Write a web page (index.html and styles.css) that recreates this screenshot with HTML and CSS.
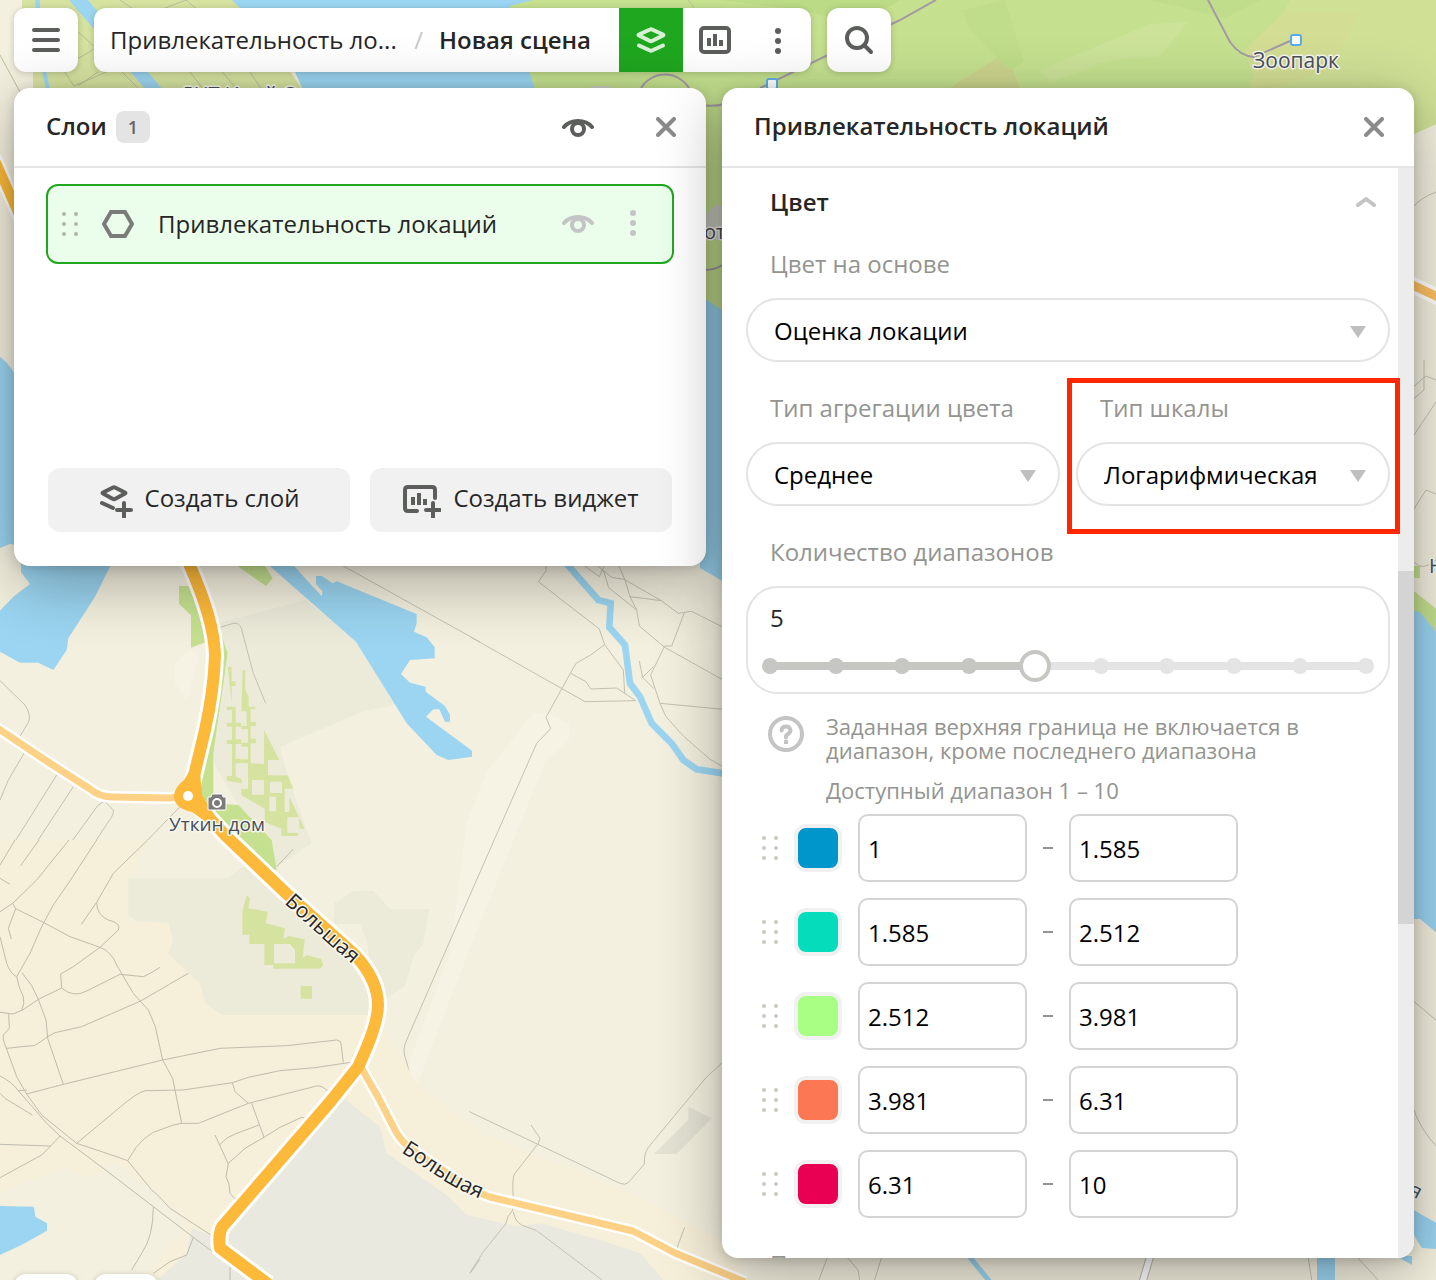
FILE: index.html
```html
<!DOCTYPE html>
<html lang="ru">
<head>
<meta charset="utf-8">
<meta name="viewport" content="width=device-width, initial-scale=1">
<title>Привлекательность локаций</title>
<link rel="stylesheet" href="styles.css">
</head>
<body>
<svg class="map" viewBox="0 0 1436 1280" preserveAspectRatio="xMinYMin slice" aria-hidden="true">
  <rect width="1436" height="1280" fill="#f4f0df"/>

  <!-- parks and water along the north edge -->
  <path fill="#d6e2a0" d="M22 0H240L310 100H33V72L22 8Z"/>
  <path fill="#c5e18f" d="M500 0H1436V124L1414 134H722V318L700 300V100H530Z"/>
  <path fill="#d0e196" d="M1290 0H1436V124L1400 140H1230L1260 60Z"/>
  <path fill="#d3dd93" d="M1244 50L1284 12L1360 12L1330 70L1260 92Z"/>
  <path fill="#cbd48c" d="M950 88L1006 52L1020 88Z"/>
  <path fill="#bfdd8a" d="M963 10L1005 0L1024 62L1010 70L968 28ZM1150 0H1260L1225 18Z"/>
  <path fill="#bcdb86" d="M720 0H900L860 24L800 10Z"/>
  <path fill="#cbe298" d="M1040 70L1150 24L1188 22L1160 56L1110 60L1050 82Z"/>
  <path fill="#9bd5f1" d="M232 0H533L510 6L535 90H303L295 72L240 8ZM69 0H88L163 90H146Z"/>
  <path fill="#9bd5f1" d="M35 0H40L40 40L50 90H46L38 50Z"/>
  <path fill="none" stroke="#b9bd96" d="M120 0L140 14M160 10L186 0L212 22M76 30L96 48L62 68L74 86L120 66M78 86L98 72M122 72L140 90M190 72L204 90M222 72L238 90M250 72L262 90M688 0L696 10M0 55L20 92"/>
  <path fill="none" stroke="#a39aa6" stroke-width="2" d="M640 90A28 28 0 0 1 690 90M760 88L830 54L900 20L936 0M1208 0L1230 42Q1240 56 1254 57L1290 41M700 105Q715 107 724 104M704 270Q716 270 724 264"/>
  <path fill="#9bd5f1" d="M704 298L724 312V582L700 568Z"/>
  <path fill="#cfd0c6" d="M706 214L716 204L724 208V240H706ZM591 86H610V90H591Z"/>

  <!-- west edge -->
  <path fill="#9bd5f1" d="M0 357Q8 362 16 376V545L10 544L0 548Z"/>
  <path fill="none" stroke="#fff" stroke-width="15" d="M-6 158L24 226"/>
  <path fill="none" stroke="#fdb93a" stroke-width="10" d="M-6 158L24 226"/>

  <!-- east edge -->
  <path fill="none" stroke="#c2bfae" d="M1412 208Q1420 198 1436 192M1412 388L1426 376L1436 380M1412 400L1424 390V360M1412 438L1436 402M1412 512L1426 490L1436 494M1414 562Q1422 572 1436 560M1412 670L1436 700M1412 1000L1436 1020M1412 1105Q1420 1130 1438 1148"/>
  <path fill="none" stroke="#fff" stroke-width="16" d="M1406 282L1440 298"/>
  <path fill="none" stroke="#fdc163" stroke-width="9" d="M1406 282L1440 298"/>
  <path fill="#c5e18f" d="M1410 566H1420V578H1410ZM1410 588L1438 610V636L1410 612Z"/>
  <path fill="#9bd5f1" d="M1410 610L1420 612L1438 634V934L1420 919H1410ZM1410 1208L1438 1224V1249L1422 1248Q1412 1235 1410 1220ZM1396 1256H1412V1265Z"/>

  <!-- lakes and fields south of the panel -->
  <svg x="0" y="440" width="480" height="420" viewBox="0 0 1440 1260" overflow="visible">
    <path fill="#ecebda" d="M650 550L915 480L1068 600L1185 795L1085 815L840 922L870 1030L935 1210L820 1290L740 1140L625 940L680 640Z"/>
    <path fill="#c5e18f" d="M537 438H590L620 605L573 623V526L537 492ZM700 370H790L818 415L798 438ZM664 585L683 640L640 940L640 1090L715 1095L815 1200L830 1290L800 1290L600 1090V980L640 800Z"/>
    <path fill="#d6e3a0" d="M683 680h12v44h12v14h-12v62h12v48h16v12h-16v38h16v14h-16v44h16v14h-16v40l18 6v14l-45-8v-14h16v-96h-16v-12h16v-40h-16v-12h16v-38h-16v-10h16zM728 690h8v60l10 20v30h20v8h-14v38h16v12h-16v38h16v14h-16v60l40 2V870l46 90h-34v46h60l16 40h-26v70h14v-46l46 96h-20v22h-50v-22l-50-20v-40l-70-40v-20h20v-76h-20v-12h20v-38h-20v-12h20v-40h-20v-10h16v-44h-16z"/>
    <path fill="#ecebda" d="M756 1020h36v44h-36zM810 1025h36v34h-36zM808 1070h20v44h-20zM862 1132h36v46h-36z"/>
    <path fill="#9bd5f1" d="M63 370H335L285 470L205 595L200 630L160 690L115 668H60L0 635V512L40 470L90 432L63 396Z"/>
    <path fill="#9bd5f1" d="M800 370H875L920 420L965 468L968 455L948 432V408H965L998 430L1010 424L1250 522V550L1242 575L1280 592L1304 622V655L1230 660L1203 702L1230 728L1277 740V755L1335 798L1350 825V845H1335L1318 808H1300L1278 830L1416 932V950L1345 960L1310 945L1220 850L1068 605Z"/>
    <path fill="#f6f3e5" d="M570 630L595 650L560 780L525 730V670Z"/>
    <path fill="none" stroke="#c3c1b0" stroke-width="3" d="M1030 378L1440 606M650 565L700 550Q718 548 724 565L760 700L797 790M0 722L75 795Q95 825 85 848L58 892L0 850M75 935L25 1020L0 1080M170 1005L10 1260M220 1040L75 1260M310 1080L340 1110Q342 1125 325 1145L250 1260M310 1085Q290 1095 280 1115L175 1260M540 1100L385 1260"/>
  </svg>
  <svg x="470" y="540" width="270" height="420" viewBox="0 0 810 1260" overflow="visible">
    <path fill="#f6f3e5" d="M190 518L240 522L297 552V598L225 665L0 1225L-100 1480L-190 1720L-210 1640L-60 1240L-10 850L48 700Z"/>
    <path fill="none" stroke="#9bd5f1" stroke-width="20" d="M280 60L385 180L422 190L418 262L465 315L480 430L510 470L545 550L605 610L640 660L680 688L760 700"/>
    <path fill="none" stroke="#c3c1b0" stroke-width="3" d="M0 290L345 485L497 482L440 444L362 447L348 425L301 400L318 370L362 345L404 314L460 390L464 460M228 70V92L205 125L388 267L404 314M301 400L228 532L242 566L200 610L0 1065L-190 1500Q-205 1530 -192 1560L-165 1655Q-150 1690 -60 1732L0 1760M340 75L388 110L404 75M380 75L425 112L462 118L574 182L625 220L665 214L760 262M400 90L416 143L500 210L508 258L584 322L760 420M445 75L465 120L480 170L574 182M480 170L500 210M644 216L605 318H584L542 405L570 490L760 508M508 363L518 412L550 380M518 412L552 446M570 490L588 530L640 588L720 658L760 680"/>
  </svg>

  <!-- residential grid and industrial zone -->
  <svg x="0" y="840" width="480" height="440" viewBox="0 0 1440 1320" overflow="visible">
    <path fill="#f6efd9" d="M0 0H445L385 115V240L505 250L600 430L670 525H1120L1260 740L1440 880L1900 1060L2240 1240L2190 1340H400L440 1290L320 1040L200 980L0 1060Z"/>
    <path fill="#f4f0df" d="M0 1060L180 985L240 1035L345 965L455 1050L570 1150L440 1300L0 1330Z"/>
    <path fill="#ecebda" d="M385 114H685L740 70L820 90L900 180L1110 380L1100 300L1080 252H1002V190L1060 153H1120L1172 207H1288L1270 310L1240 350L1215 438L1150 480L1120 525H668L615 490L600 430L505 342L520 300L505 248L410 245L385 225Z"/>
    <path fill="#d6e3a0" d="M740 165L750 175L745 205L803 215L798 250L855 265L850 298L865 288L914 298L908 355L920 345L962 356L970 375L960 386H820V375H793V312H748V284H727V215ZM902 438h34v38h-34z"/>
    <path fill="#ecebda" d="M822 312H870L885 330V370H822Z"/>
    <path fill="#e9e9df" d="M1030 775L1140 860L1160 940L1340 1065L1400 1125L1550 1160L1620 1150L1800 1200L1920 1240L2000 1330H460L560 1240L575 1165L640 1190L700 1080Z"/>
    <path fill="#9bd5f1" d="M0 1098L102 1100L106 1130L141 1150V1172L70 1212L0 1245Z"/>
    <path fill="none" stroke="#bfbdae" stroke-width="3" d="M45 0L0 75M117 0L62 77M207 0L110 120L38 190L0 215M290 0L205 130L160 195L125 260L90 340L50 410Q30 400 20 370L0 290M443 0L340 100L290 187L244 253M0 115L30 133M38 190L47 206L25 265L34 297M47 206L130 247L210 290L300 322Q335 335 350 375L400 460L445 510L466 560L488 660L518 715L545 850M290 187Q290 225 325 240Q365 250 355 270L300 322L220 380L182 402L185 444L115 478L68 510L38 522L0 517M185 444Q220 475 260 453L360 403L430 410Q450 402 480 382M50 410Q55 440 70 470Q75 490 65 512M66 398L95 437L115 478L138 540L143 595L190 733M20 625L85 618Q105 620 115 610L143 590L165 578L245 560L420 484L565 400M26 520L28 565L10 585V600L50 710L80 762L125 825L230 910L350 950L383 962L455 1050L470 1062L510 1105L640 1190M80 762L190 733L488 660L660 625L860 617L1010 600L1022 605L1030 667M230 910L380 785Q430 745 450 752L550 750L697 728L745 712L840 692L945 683L1065 665M545 850L595 850L745 790L950 738Q965 735 985 755M383 962L410 920Q435 890 460 877L520 855L545 850M697 728L705 755L745 790M755 790L792 892L735 925L685 970L678 1010Q690 1030 690 1060L710 1082M645 885L685 972M658 915Q680 890 705 882L777 855M792 892L840 862L905 832L920 836M0 708Q35 725 55 752L80 750M55 752L140 850L180 888L310 985L460 1100L580 1192L750 1320M0 760L15 775L97 825M0 913L152 918L180 888M152 918L125 945L0 1013M460 1100Q460 1190 425 1240L395 1290M580 1192L560 1245L510 1265L460 1300M690 1275V1320M1440 1258L1410 1300M830 80L880 27"/>
  </svg>
  <svg x="470" y="900" width="270" height="380" viewBox="0 0 810 1140" overflow="visible">
    <path fill="#e4e2d3" d="M655 620L725 655L620 762H552L655 660Z"/>
    <path fill="none" stroke="#c3c1b0" stroke-width="3" d="M-2 635L450 850Q465 856 475 848L523 792Q522 760 535 742L708 533L760 485M183 675L210 715L205 730L135 820Q125 830 130 895L128 930Q110 950 107 972L40 1055L0 1118M130 935Q135 965 155 975L200 992L396 1140M644 982L618 1052"/>
  </svg>

  <!-- below the settings panel -->
  <path fill="none" stroke="#9bd5f1" stroke-width="18" d="M1326 1250V1284"/>
  <path fill="none" stroke="#9bd5f1" stroke-width="5" d="M964 1250L990 1282"/>
  <path fill="none" stroke="#c3c1b0" d="M828 1256L818 1282M846 1256L858 1270L860 1282M882 1256L874 1282M1308 1256L1312 1282M1356 1256L1380 1282"/>
  <path fill="none" stroke="#b9b7ab" stroke-width="8" d="M1152 1250L1142 1284"/>
  <path fill="none" stroke="#fff" stroke-width="6" d="M1152 1250L1142 1284"/>

  <!-- main roads -->
  <g fill="none" stroke-linejoin="round">
    <path stroke="#fff" stroke-width="12" d="M-4 727L45 760L90 789Q100 797 112 797L170 798L186 796M358 1062L378 1097L396 1132Q402 1142 412 1150L444 1171Q468 1190 490 1197L570 1216L633 1231L675 1253L745 1282"/>
    <path stroke="#fff" stroke-width="18" d="M176 528L190 566Q214 620 215 655Q214 690 205 730L193 780L190 797L226 836L288 895L355 955Q378 980 378 1005Q378 1025 358 1067L330 1102L222 1227Q218 1235 220 1248L268 1284"/>
    <path stroke="#fdd286" stroke-width="7" d="M-4 727L45 760L90 789Q100 797 112 797L170 798L186 796M358 1062L378 1097L396 1132Q402 1142 412 1150L444 1171Q468 1190 490 1197L570 1216L633 1231L675 1253L745 1282"/>
    <path stroke="#fdb93a" stroke-width="12" d="M176 528L190 566Q214 620 215 655Q214 690 205 730L193 780L190 797L226 836L288 895L355 955Q378 980 378 1005Q378 1025 358 1067L330 1102L222 1227Q218 1235 220 1248L268 1284"/>
  </g>
  <path fill="#fdb93a" d="M190 770L200 772L202 795L214 814L206 822L192 812Q174 808 174 796Q174 788 184 780Z"/>
  <circle cx="188" cy="796" r="5" fill="#fff"/>

  <!-- labels and markers -->
  <path id="road-a" fill="none" d="M284 903L330 945Q350 962 374 984"/>
  <path id="road-b" fill="none" d="M401 1152L440 1178Q465 1195 510 1210"/>
  <g class="map-label">
    <text x="180" y="101">ДНТ Иной О</text>
    <text x="704" y="239">от</text>
    <text class="map-place" x="1253" y="68">Зоопарк</text>
    <text class="map-sight" x="169" y="831">Уткин дом</text>
    <text x="1429" y="573">Н</text>
    <text transform="translate(1408 1194) rotate(28)">я</text>
    <text class="map-road"><textPath href="#road-a">Большая</textPath></text>
    <text class="map-road"><textPath href="#road-b">Большая</textPath></text>
  </g>
  <g fill="#fff" stroke="#5aaee6" stroke-width="2">
    <rect x="1291" y="35" width="10" height="10" rx="2"/>
    <rect x="767" y="79" width="10" height="10" rx="2"/>
  </g>
  <path fill="#7b7c7a" stroke="#fff" d="M212 794H222L223 797H226V810H208V797H211Z"/>
  <circle cx="217" cy="803" r="4" fill="#7b7c7a" stroke="#fff" stroke-width="2"/>
</svg>

<div class="app">
  <header class="toolbar">
    <button class="tile" type="button" aria-label="Меню">
      <svg width="28" height="28" viewBox="0 0 28 28"><path class="line" d="M2 4H26M2 14H26M2 24H26"/></svg>
    </button>
    <div class="scene-bar">
      <nav class="crumbs">
        <a class="crumb" href="#project">Привлекательность ло...</a>
        <span class="slash">/</span>
        <strong class="scene">Новая сцена</strong>
      </nav>
      <button class="tool tool-active" type="button" aria-label="Слои">
        <svg width="32" height="32" viewBox="0 0 32 32"><path class="line" d="M4 10.500Q3 11 4 11.500L15 17Q16 17.500 17 17L28 11.500Q29 11 28 10.500L17 5.500Q16 5 15 5.500ZM4 21.500L15 26.500Q16 27 17 26.500L28 21.500"/></svg>
      </button>
      <button class="tool" type="button" aria-label="Виджеты">
        <svg width="32" height="32" viewBox="0 0 32 32"><rect class="line" x="2" y="4" width="28" height="24" rx="3"/><path class="solid" d="M8 14h4v8H8zM14 10h4v12h-4zM20 16h4v6h-4z"/></svg>
      </button>
      <button class="tool" type="button" aria-label="Ещё">
        <svg width="32" height="32" viewBox="0 0 32 32"><circle class="solid" cx="15" cy="7" r="3"/><circle class="solid" cx="15" cy="17" r="3"/><circle class="solid" cx="15" cy="27" r="3"/></svg>
      </button>
    </div>
    <button class="tile" type="button" aria-label="Поиск">
      <svg width="32" height="32" viewBox="0 0 32 32"><circle class="line" cx="14" cy="14" r="10"/><path class="line" d="M21 21L28 28"/></svg>
    </button>
  </header>

  <main class="panels">
    <section class="panel layers">
      <header class="panel-head">
        <h2 class="panel-title">Слои</h2>
        <span class="count">1</span>
        <button class="icon-btn head-eye" type="button" aria-label="Видимость слоёв">
          <svg width="32" height="20" viewBox="0 0 32 20"><path class="line" d="M2 10Q7 4 16 4T30 10"/><circle class="line" cx="16" cy="12" r="6"/></svg>
        </button>
        <button class="icon-btn close" type="button" aria-label="Закрыть">
          <svg width="20" height="20" viewBox="0 0 20 20"><path class="line" d="M2 2L18 18M18 2L2 18"/></svg>
        </button>
      </header>
      <ul class="layer-list">
        <li class="layer">
          <svg class="grip" width="16" height="24" viewBox="0 0 16 24"><path d="M2 2h0M14 2h0M2 12h0M14 12h0M2 22h0M14 22h0"/></svg>
          <svg class="hex" width="32" height="28" viewBox="0 0 32 28"><path class="line sharp" d="M9 2H23L30 14L23 26H9L2 14Z"/></svg>
          <span class="layer-name">Привлекательность локаций</span>
          <button class="icon-btn muted" type="button" aria-label="Скрыть слой">
            <svg width="32" height="20" viewBox="0 0 32 20"><path class="line" d="M2 9Q7 3 16 3T30 9"/><circle class="line" cx="16" cy="11" r="6"/></svg>
          </button>
          <button class="icon-btn muted layer-more" type="button" aria-label="Действия со слоем">
            <svg width="8" height="28" viewBox="0 0 8 28"><circle class="solid" cx="4" cy="3" r="3"/><circle class="solid" cx="4" cy="13" r="3"/><circle class="solid" cx="4" cy="23" r="3"/></svg>
          </button>
        </li>
      </ul>
      <footer class="layer-actions">
        <button class="action" type="button">
          <svg width="34" height="36" viewBox="0 0 34 36"><path class="line" d="M4 10.500Q3 11 4 11.500L14 17Q15 17.500 16 17L26 11.500Q27 11 26 10.500L16 5.500Q15 5 14 5.500ZM3 21L14 26M18 28H32M25 21V35"/></svg>
          <span>Создать слой</span>
        </button>
        <button class="action" type="button">
          <svg width="38" height="36" viewBox="0 0 38 36"><path class="line" d="M32 16V8Q32 5 29 5H5Q2 5 2 8V26Q2 29 5 29H14M23 28H37M30 21V35"/><path class="solid" d="M8 15h4v8H8zM14 11h4v12h-4zM20 17h4v6h-4z"/></svg>
          <span>Создать виджет</span>
        </button>
      </footer>
    </section>

    <section class="panel settings">
      <header class="panel-head">
        <h2 class="panel-title">Привлекательность локаций</h2>
        <button class="icon-btn close" type="button" aria-label="Закрыть">
          <svg width="20" height="20" viewBox="0 0 20 20"><path class="line" d="M2 2L18 18M18 2L2 18"/></svg>
        </button>
      </header>
      <div class="settings-view">
        <form class="settings-form">
          <div class="section-head">
            <h3 class="section-title">Цвет</h3>
            <button class="icon-btn muted" type="button" aria-label="Свернуть">
              <svg width="20" height="12" viewBox="0 0 20 12"><path class="line" d="M2 9L10 3L18 9"/></svg>
            </button>
          </div>
          <div class="field">
            <label class="label" for="basis">Цвет на основе</label>
            <select class="select" id="basis"><option>Оценка локации</option></select>
          </div>
          <div class="field-pair">
            <div class="field">
              <label class="label" for="aggregation">Тип агрегации цвета</label>
              <select class="select" id="aggregation"><option>Среднее</option></select>
            </div>
            <div class="field highlighted">
              <label class="label" for="scale">Тип шкалы</label>
              <select class="select" id="scale"><option>Логарифмическая</option></select>
            </div>
          </div>
          <div class="field">
            <label class="label" for="ranges">Количество диапазонов</label>
            <div class="stepper">
              <output class="stepper-value" for="ranges">5</output>
              <div class="slider">
                <div class="ticks"><i class="on"></i><i class="on"></i><i class="on"></i><i class="on"></i><i class="on"></i><i></i><i></i><i></i><i></i><i></i></div>
                <input class="range" id="ranges" type="range" min="1" max="10" value="5">
              </div>
            </div>
          </div>
          <div class="hint">
            <svg width="36" height="36" viewBox="0 0 36 36"><circle class="line" cx="18" cy="18" r="16"/><path class="line" d="M13.500 14.500Q14 10.500 18 10.500T22.500 14.500Q22.500 16.500 20 18T18 21.500"/><path class="solid" d="M16 24h4v4h-4z"/></svg>
            <div class="hint-text">
              <p>Заданная верхняя граница не включается в диапазон, кроме последнего диапазона</p>
              <p>Доступный диапазон 1 – 10</p>
            </div>
          </div>
          <div class="ranges">
            <div class="range-row">
              <svg class="grip" width="16" height="24" viewBox="0 0 16 24"><path d="M2 2h0M14 2h0M2 12h0M14 12h0M2 22h0M14 22h0"/></svg>
              <button class="swatch blue" type="button" aria-label="Цвет 1"></button>
              <input class="bound" value="1" aria-label="От 1"><span class="dash"></span><input class="bound" value="1.585" aria-label="До 1">
            </div>
            <div class="range-row">
              <svg class="grip" width="16" height="24" viewBox="0 0 16 24"><path d="M2 2h0M14 2h0M2 12h0M14 12h0M2 22h0M14 22h0"/></svg>
              <button class="swatch teal" type="button" aria-label="Цвет 2"></button>
              <input class="bound" value="1.585" aria-label="От 2"><span class="dash"></span><input class="bound" value="2.512" aria-label="До 2">
            </div>
            <div class="range-row">
              <svg class="grip" width="16" height="24" viewBox="0 0 16 24"><path d="M2 2h0M14 2h0M2 12h0M14 12h0M2 22h0M14 22h0"/></svg>
              <button class="swatch lime" type="button" aria-label="Цвет 3"></button>
              <input class="bound" value="2.512" aria-label="От 3"><span class="dash"></span><input class="bound" value="3.981" aria-label="До 3">
            </div>
            <div class="range-row">
              <svg class="grip" width="16" height="24" viewBox="0 0 16 24"><path d="M2 2h0M14 2h0M2 12h0M14 12h0M2 22h0M14 22h0"/></svg>
              <button class="swatch coral" type="button" aria-label="Цвет 4"></button>
              <input class="bound" value="3.981" aria-label="От 4"><span class="dash"></span><input class="bound" value="6.31" aria-label="До 4">
            </div>
            <div class="range-row">
              <svg class="grip" width="16" height="24" viewBox="0 0 16 24"><path d="M2 2h0M14 2h0M2 12h0M14 12h0M2 22h0M14 22h0"/></svg>
              <button class="swatch crimson" type="button" aria-label="Цвет 5"></button>
              <input class="bound" value="6.31" aria-label="От 5"><span class="dash"></span><input class="bound" value="10" aria-label="До 5">
            </div>
          </div>
          <p class="label">П</p>
        </form>
        <div class="scrollbar"><div class="scroll-before"></div><div class="scroll-thumb"></div><div class="scroll-after"></div></div>
      </div>
    </section>
  </main>

  <footer class="dock">
    <button class="tile" type="button" aria-label="Слой карты"></button>
    <button class="tile" type="button" aria-label="Линейка"></button>
  </footer>
</div>
</body>
</html>
```
FILE: styles.css
```css
* {
  box-sizing: border-box;
}

body {
  margin: 0;
  height: 100vh;
  overflow: hidden;
  background: #f4f0df;
  color: #262626;
  font: 24px/32px "Open Sans", "Noto Sans", sans-serif;
}

h2, h3, p, ul {
  margin: 0;
  padding: 0;
  font-size: inherit;
}

button, input, select {
  margin: 0;
  padding: 0;
  border: 0;
  background: none;
  color: inherit;
  font: inherit;
}

button {
  display: flex;
  align-items: center;
  justify-content: center;
  cursor: pointer;
}

svg {
  flex: none;
}

.line {
  fill: none;
  stroke: currentColor;
  stroke-width: 4;
  stroke-linecap: round;
  stroke-linejoin: round;
}

.sharp {
  stroke-linejoin: miter;
}

.solid {
  fill: currentColor;
}

/* Map */

.map {
  position: absolute;
  inset: 0;
  width: 100%;
  height: 100%;
}

.map-label {
  fill: #46505a;
  stroke: #f8f7ee;
  stroke-width: 3px;
  stroke-linejoin: round;
  paint-order: stroke;
  font-size: 20px;
}

.map-place {
  font-size: 21px;
}

.map-sight {
  font-size: 19px;
}

.map-road {
  fill: #262626;
  font-size: 21px;
}

/* Shell */

.app {
  position: relative;
  display: flex;
  flex-direction: column;
  gap: 16px;
  height: 100vh;
  padding: 8px 22px 0 14px;
}

.toolbar {
  display: flex;
  gap: 16px;
  flex: none;
  height: 64px;
}

.tile {
  flex: none;
  width: 64px;
  height: 64px;
  border-radius: 12px;
  background: #fff;
  box-shadow: 0 1px 6px rgba(0, 0, 0, 0.2);
  color: #5c5e5c;
}

.scene-bar {
  display: flex;
  flex: 0 1 717px;
  min-width: 0;
  overflow: hidden;
  border-radius: 12px;
  background: #fff;
  box-shadow: 0 1px 6px rgba(0, 0, 0, 0.2);
}

.crumbs {
  display: flex;
  flex: 1;
  align-items: center;
  min-width: 0;
  padding: 0 28px 0 16px;
}

.crumb {
  flex: 1;
  min-width: 0;
  overflow: hidden;
  color: inherit;
  text-decoration: none;
  text-overflow: ellipsis;
  white-space: nowrap;
}

.slash {
  margin: 0 16px;
  color: #c8c8c8;
}

.scene {
  font-weight: 600;
  white-space: nowrap;
}

.tool {
  flex: none;
  width: 64px;
  color: #5c5e5c;
}

.tool-active {
  background: #1fa71f;
  color: #d9f2d6;
}

.panels {
  display: flex;
  flex: 1;
  align-items: flex-start;
  gap: 16px;
  min-height: 0;
}

.panel {
  flex: 1;
  min-width: 0;
  border-radius: 16px;
  background: #fff;
  box-shadow: 0 2px 12px rgba(0, 0, 0, 0.16), 0 16px 64px rgba(0, 0, 0, 0.32);
}

.panel-head {
  display: flex;
  align-items: center;
  height: 80px;
  padding: 0 30px 0 32px;
  border-bottom: 2px solid #e5e5e5;
}

.panel-title {
  padding-bottom: 2px;
  font-weight: 600;
}

.icon-btn {
  color: #5c5e5c;
}

.close {
  margin-left: auto;
  color: #8b8b8b;
}

.muted {
  color: #c4c4c4;
}

.dock {
  display: flex;
  flex: none;
  gap: 16px;
  height: 6px;
}

/* Layers */

.count {
  margin-left: 9px;
  padding: 0 12px;
  border-radius: 8px;
  background: #e4e4e4;
  color: #666;
  font-size: 18px;
  font-weight: 600;
}

.head-eye {
  margin-left: auto;
}

.head-eye + .close {
  margin-left: 62px;
}

.layer-list {
  min-height: 300px;
  padding: 16px 32px;
  list-style: none;
}

.layer {
  display: flex;
  align-items: center;
  height: 80px;
  padding: 0 35px 0 14px;
  border: 2px solid #1fa71f;
  border-radius: 12px;
  background: #ebfdeb;
}

.grip {
  fill: none;
  stroke: #c9c9c0;
  stroke-width: 4;
  stroke-linecap: round;
}

.layer .grip {
  stroke: #b0b5ac;
}

.hex {
  margin: 0 24px;
  color: #7a7c79;
}

.layer-name {
  flex: 1;
  min-width: 0;
}

.layer-more {
  margin-left: 35px;
}

.layer-actions {
  display: flex;
  gap: 20px;
  padding: 0 34px 34px;
}

.action {
  flex: 1;
  gap: 12px;
  height: 64px;
  border-radius: 12px;
  background: #f1f1f1;
}

.action svg {
  color: #5c5e5c;
}

.action span {
  padding-bottom: 4px;
}

/* Settings */

.settings {
  display: flex;
  flex-direction: column;
  height: 100%;
}

.settings-view {
  display: flex;
  flex: 1;
  min-height: 0;
  overflow: hidden;
  border-bottom-left-radius: 16px;
  border-bottom-right-radius: 16px;
}

.settings-form {
  flex: 1;
  min-width: 0;
  padding: 18px 8px 0 24px;
}

.section-head {
  display: flex;
  align-items: center;
  justify-content: space-between;
  padding: 0 14px 0 24px;
}

.section-title {
  font-weight: 600;
}

.field {
  flex: 1;
  min-width: 0;
}

.field-pair {
  display: flex;
  gap: 16px;
}

.label {
  display: block;
  padding: 30px 24px 18px;
  color: #949490;
}

.select {
  display: block;
  width: 100%;
  height: 64px;
  padding: 2px 48px 0 26px;
  border: 2px solid #e4e4e4;
  border-radius: 32px;
  appearance: none;
  background: url("data:image/svg+xml,%3Csvg xmlns='http://www.w3.org/2000/svg' width='16' height='12'%3E%3Cpath fill='%23bfbfbf' d='M0 0h16L8 12z'/%3E%3C/svg%3E") no-repeat right 22px top 26px;
  color: #000;
}

.highlighted {
  position: relative;
}

.highlighted::after {
  content: "";
  position: absolute;
  z-index: 1;
  inset: 16px -10px -28px -9px;
  border: 5px solid #ff2600;
  pointer-events: none;
}

.stepper {
  padding: 14px 6px 10px;
  border: 2px solid #e4e4e4;
  border-radius: 32px;
}

.stepper-value {
  display: block;
  padding: 0 16px;
}

.slider {
  display: grid;
  margin-top: 16px;
}

.ticks, .range {
  grid-area: 1 / 1;
}

.ticks {
  display: flex;
  align-items: center;
  justify-content: space-between;
  margin: 0 8px;
  background: linear-gradient(to right, #c6c6c3 44%, #e4e4e4 44%) no-repeat center / 98% 8px;
}

.ticks i {
  width: 16px;
  height: 16px;
  border-radius: 50%;
  background: #e4e4e4;
}

.ticks .on {
  background: #c6c6c3;
}

.range {
  width: 100%;
  height: 32px;
  appearance: none;
}

.range::-webkit-slider-thumb {
  width: 32px;
  height: 32px;
  border: 4px solid #c6c6c3;
  border-radius: 50%;
  appearance: none;
  background: #fff;
}

.hint {
  display: flex;
  align-items: flex-start;
  gap: 22px;
  padding: 20px 40px 12px 22px;
  color: #949490;
  font-size: 22px;
  line-height: 24px;
}

.hint svg {
  margin-top: 2px;
  color: #c4c4c4;
}

.hint-text {
  display: grid;
  gap: 16px;
}

.ranges {
  display: grid;
  gap: 16px;
  padding-left: 16px;
}

.range-row {
  display: flex;
  align-items: center;
  gap: 16px;
}

.swatch {
  flex: none;
  width: 48px;
  height: 48px;
  border: 4px solid #f1f1f1;
  border-radius: 12px;
}

.blue { background: #0095cb; }
.teal { background: #05dcbc; }
.lime { background: #a8ff84; }
.coral { background: #fc7753; }
.crimson { background: #ea0053; }

.bound {
  flex: 0 1 169px;
  min-width: 0;
  height: 68px;
  padding: 0 8px;
  border: 2px solid #d4d4d4;
  border-radius: 10px;
  color: #000;
}

.dash {
  width: 10px;
  height: 2px;
  background: #949490;
}

.scrollbar {
  display: flex;
  flex: none;
  flex-direction: column;
  width: 16px;
  background: #ececec;
}

.scroll-before {
  flex: 403;
}

.scroll-thumb {
  flex: 353;
  background: #d4d4d4;
}

.scroll-after {
  flex: 334;
}
```
